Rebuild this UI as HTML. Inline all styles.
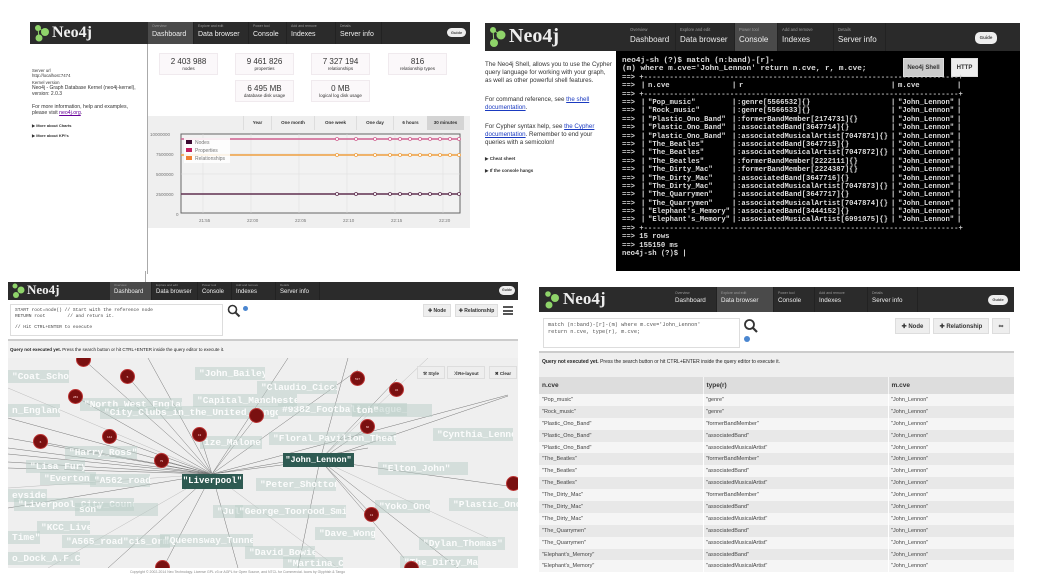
<!DOCTYPE html>
<html><head><meta charset="utf-8">
<style>
*{margin:0;padding:0;box-sizing:border-box}
body{width:1043px;height:588px;background:#fff;position:relative;overflow:hidden;font-family:"Liberation Sans",sans-serif;color:#333}
.a{position:absolute}
.hdr{position:absolute;background:#2b2b2b}
.tab{position:absolute;top:0;height:100%;color:#eee;border-right:1px solid #222}
.tab.on{background:#4a4a4a}
.tab small{position:absolute;left:4px;color:#999;white-space:nowrap}
.tab span{position:absolute;left:4px;white-space:nowrap}
.logo{position:absolute;color:#eee;font-family:"Liberation Serif",serif;font-weight:bold}
.guide{position:absolute;background:#eee;border-radius:5px;color:#444;text-align:center;font-weight:bold}
.mono{font-family:"Liberation Mono",monospace}
.lb{position:absolute;background:rgba(185,205,200,.5);color:rgba(255,255,255,.9);font-family:"Liberation Mono",monospace;font-weight:bold;font-size:9.5px;line-height:13px;padding:0 4px;white-space:nowrap;overflow:hidden}
.rc{position:absolute;width:15px;height:15px;border-radius:50%;background:#7a1010;border:1px solid #b33;color:#fcc;font-size:3px;text-align:center;line-height:15px}
.btn{position:absolute;background:#eee;border:1px solid #ddd;font-size:6px;font-weight:bold;color:#333;text-align:center}
.t td{padding:0 3px;font-size:5.5px;height:11.9px;color:#444}
.tr{position:relative;height:8.4px}
</style></head><body>

<!-- ============ PANEL 1 ============ -->
<div class="hdr" style="left:30px;top:22px;width:440px;height:22px">
  <svg class="a" style="left:4px;top:2px" width="16" height="18"><circle cx="4" cy="4" r="3" fill="#8fd46a"/><circle cx="11" cy="8" r="4" fill="#8fd46a"/><circle cx="5" cy="14" r="3.5" fill="#8fd46a"/><path d="M4 4L5 14M4 4L11 8" stroke="#8fd46a"/></svg>
  <div class="logo" style="left:22px;top:2px;font-size:16px">Neo4j</div>
  <div class="tab on" style="left:118px;width:46px"><small style="top:2px;font-size:3.5px">Overview</small><span style="top:9px;font-size:7px">Dashboard</span></div>
  <div class="tab" style="left:164px;width:55px"><small style="top:2px;font-size:3.5px">Explore and edit</small><span style="top:9px;font-size:7px">Data browser</span></div>
  <div class="tab" style="left:219px;width:38px"><small style="top:2px;font-size:3.5px">Power tool</small><span style="top:9px;font-size:7px">Console</span></div>
  <div class="tab" style="left:257px;width:49px"><small style="top:2px;font-size:3.5px">Add and remove</small><span style="top:9px;font-size:7px">Indexes</span></div>
  <div class="tab" style="left:306px;width:46px"><small style="top:2px;font-size:3.5px">Details</small><span style="top:9px;font-size:7px">Server info</span></div>
  <div class="guide" style="left:417px;top:6px;width:19px;height:9px;font-size:4px;line-height:9px">Guide</div>
</div>
<div class="a" style="left:147px;top:44px;width:1px;height:230px;background:#aaa"></div>
<div class="a" style="left:32px;top:68px;width:112px;font-size:4.3px;line-height:5px;color:#333">
Server url<br>http://localhost:7474<br><div style="height:2px"></div>Kernel version<br><span style="font-size:5px">Neo4j - Graph Database Kernel (neo4j-kernel), version: 2.0.3</span>
<div style="height:7px"></div><span style="font-size:5.2px;line-height:6px;display:block">For more information, help and examples, please visit <u style="color:#609">neo4j.org</u>.</span>
<div style="height:7px"></div><b style="font-size:4px">▶ More about Charts</b><div style="height:5px"></div><b style="font-size:4px">▶ More about KPI's</b>
</div>
<div class="a" style="left:159px;top:53px;width:59px;height:22px;background:#fbf8fa;border:1px solid #f0eaee;text-align:center"><div style="font-size:8px;margin-top:3px">2 403 988</div><div style="font-size:4.5px">nodes</div></div>
<div class="a" style="left:235px;top:53px;width:59px;height:22px;background:#fbf8fa;border:1px solid #f0eaee;text-align:center"><div style="font-size:8px;margin-top:3px">9 461 826</div><div style="font-size:4.5px">properties</div></div>
<div class="a" style="left:311px;top:53px;width:59px;height:22px;background:#fbf8fa;border:1px solid #f0eaee;text-align:center"><div style="font-size:8px;margin-top:3px">7 327 194</div><div style="font-size:4.5px">relationships</div></div>
<div class="a" style="left:388px;top:53px;width:59px;height:22px;background:#fbf8fa;border:1px solid #f0eaee;text-align:center"><div style="font-size:8px;margin-top:3px">816</div><div style="font-size:4.5px">relationship types</div></div>
<div class="a" style="left:235px;top:80px;width:59px;height:22px;background:#fbf8fa;border:1px solid #f0eaee;text-align:center"><div style="font-size:8px;margin-top:3px">6 495 MB</div><div style="font-size:4.5px">database disk usage</div></div>
<div class="a" style="left:311px;top:80px;width:59px;height:22px;background:#fbf8fa;border:1px solid #f0eaee;text-align:center"><div style="font-size:8px;margin-top:3px">0 MB</div><div style="font-size:4.5px">logical log disk usage</div></div>
<div class="a" style="left:148px;top:116px;width:322px;height:112px;background:#efefef"></div>
<div class="a" style="left:243px;top:116px;width:229px;height:14px;font-size:4.5px;font-weight:bold;color:#333">
<div class="a" style="left:0;width:28px;height:14px;border-left:1px solid #ddd;line-height:14px;text-align:center">Year</div>
<div class="a" style="left:28px;width:43px;height:14px;border-left:1px solid #ddd;line-height:14px;text-align:center">One month</div>
<div class="a" style="left:71px;width:42px;height:14px;border-left:1px solid #ddd;line-height:14px;text-align:center">One week</div>
<div class="a" style="left:113px;width:37px;height:14px;border-left:1px solid #ddd;line-height:14px;text-align:center">One day</div>
<div class="a" style="left:150px;width:34px;height:14px;border-left:1px solid #ddd;line-height:14px;text-align:center">6 hours</div>
<div class="a" style="left:184px;width:37px;height:14px;background:#d4d4d4;line-height:14px;text-align:center">30 minutes</div>
</div>
<svg class="a" style="left:148px;top:128px" width="322" height="100" font-family="Liberation Sans" font-size="4.5" fill="#777">
<rect x="33" y="6" width="279" height="79" fill="#f2f2f2" stroke="#666"/>
<g stroke="#ddd" stroke-width=".5"><line x1="33" y1="26" x2="312" y2="26"/><line x1="33" y1="46" x2="312" y2="46"/><line x1="33" y1="66" x2="312" y2="66"/><line x1="55" y1="6" x2="55" y2="85"/><line x1="103" y1="6" x2="103" y2="85"/><line x1="151" y1="6" x2="151" y2="85"/><line x1="199" y1="6" x2="199" y2="85"/><line x1="247" y1="6" x2="247" y2="85"/><line x1="295" y1="6" x2="295" y2="85"/></g>
<text x="2" y="8">10000000</text><text x="8" y="28">7500000</text><text x="8" y="48">5000000</text><text x="8" y="68">2500000</text><text x="28" y="88">0</text>
<text x="51" y="94">21:55</text><text x="99" y="94">22:00</text><text x="147" y="94">22:05</text><text x="195" y="94">22:10</text><text x="243" y="94">22:15</text><text x="291" y="94">22:20</text>
<line x1="33" y1="11" x2="312" y2="11" stroke="#d06090" stroke-width="1.5"/>
<line x1="33" y1="27" x2="312" y2="27" stroke="#f0a040" stroke-width="1.5"/>
<line x1="33" y1="66" x2="312" y2="66" stroke="#603050" stroke-width="1.5"/>
<g fill="#fff" stroke-width=".8">
<g stroke="#d06090"><circle cx="189" cy="11" r="1.5"/><circle cx="208" cy="11" r="1.5"/><circle cx="227" cy="11" r="1.5"/><circle cx="242" cy="11" r="1.5"/><circle cx="252" cy="11" r="1.5"/><circle cx="262" cy="11" r="1.5"/><circle cx="272" cy="11" r="1.5"/><circle cx="282" cy="11" r="1.5"/><circle cx="292" cy="11" r="1.5"/><circle cx="302" cy="11" r="1.5"/><circle cx="311" cy="11" r="1.5"/></g>
<g stroke="#f0a040"><circle cx="189" cy="27" r="1.5"/><circle cx="208" cy="27" r="1.5"/><circle cx="227" cy="27" r="1.5"/><circle cx="242" cy="27" r="1.5"/><circle cx="252" cy="27" r="1.5"/><circle cx="262" cy="27" r="1.5"/><circle cx="272" cy="27" r="1.5"/><circle cx="282" cy="27" r="1.5"/><circle cx="292" cy="27" r="1.5"/><circle cx="302" cy="27" r="1.5"/><circle cx="311" cy="27" r="1.5"/></g>
<g stroke="#603050"><circle cx="189" cy="66" r="1.5"/><circle cx="208" cy="66" r="1.5"/><circle cx="227" cy="66" r="1.5"/><circle cx="242" cy="66" r="1.5"/><circle cx="252" cy="66" r="1.5"/><circle cx="262" cy="66" r="1.5"/><circle cx="272" cy="66" r="1.5"/><circle cx="282" cy="66" r="1.5"/><circle cx="292" cy="66" r="1.5"/><circle cx="302" cy="66" r="1.5"/><circle cx="311" cy="66" r="1.5"/></g></g>
<rect x="36" y="10" width="46" height="25" fill="#fff" opacity=".85"/>
<rect x="38" y="12" width="6" height="4" fill="#3a0a30"/><rect x="38" y="20" width="6" height="4" fill="#c02060"/><rect x="38" y="28" width="6" height="4" fill="#f08030"/>
<text x="47" y="16" font-size="5">Nodes</text><text x="47" y="24" font-size="5">Properties</text><text x="47" y="32" font-size="5">Relationships</text>
</svg>

<!-- ============ PANEL 2 ============ -->
<div class="hdr" style="left:485px;top:23px;width:535px;height:28px;background:#2a2a2a">
  <svg class="a" style="left:3px;top:3px" width="18" height="22"><circle cx="5" cy="4" r="3" fill="#8fd46a"/><circle cx="13" cy="9" r="4.5" fill="#8fd46a"/><circle cx="6" cy="17" r="4" fill="#8fd46a"/><path d="M5 4L6 17M5 4L13 9" stroke="#8fd46a"/></svg>
  <div class="logo" style="left:24px;top:2px;font-size:20px">Neo4j</div>
  <div class="tab" style="left:141px;width:50px"><small style="top:4px;font-size:4.2px">Overview</small><span style="top:12px;font-size:8px">Dashboard</span></div>
  <div class="tab" style="left:191px;width:59px"><small style="top:4px;font-size:4.2px">Explore and edit</small><span style="top:12px;font-size:8px">Data browser</span></div>
  <div class="tab on" style="left:250px;width:43px"><small style="top:4px;font-size:4.2px">Power tool</small><span style="top:12px;font-size:8px">Console</span></div>
  <div class="tab" style="left:293px;width:56px"><small style="top:4px;font-size:4.2px">Add and remove</small><span style="top:12px;font-size:8px">Indexes</span></div>
  <div class="tab" style="left:349px;width:52px"><small style="top:4px;font-size:4.2px">Details</small><span style="top:12px;font-size:8px">Server info</span></div>
  <div class="guide" style="left:490px;top:9px;width:22px;height:12px;font-size:4.5px;line-height:12px">Guide</div>
</div>
<div class="a" style="left:485px;top:61px;width:128px;font-size:6.2px;line-height:8px;color:#333">
The Neo4j Shell, allows you to use the Cypher query language for working with your graph, as well as other powerful shell features.
<div style="height:11px"></div>For command reference, see <u style="color:#1a3ac0">the shell documentation</u>.
<div style="height:11px"></div>For Cypher syntax help, see <u style="color:#1a3ac0">the Cypher documentation</u>. Remember to end your queries with a semicolon!
<div style="height:8px"></div><b style="font-size:4.5px">▶ Cheat sheet</b><div style="height:4px"></div><b style="font-size:4.5px">▶ If the console hangs</b>
</div>
<div class="a" style="left:616px;top:51px;width:404px;height:220px;background:#000"></div>
<div class="btn" style="left:903px;top:58px;width:41px;height:19px;line-height:19px;background:#ccc;font-size:6px">Neo4j Shell</div>
<div class="btn" style="left:951px;top:58px;width:27px;height:19px;line-height:19px;background:#eee;font-size:6px">HTTP</div>
<div class="a mono" style="left:622px;top:57px;font-size:7.7px;font-weight:bold;line-height:8.4px;color:#ddd;white-space:pre">neo4j-sh (?)$ match (n:band)-[r]-
(m) where m.cve='John_Lennon' return n.cve, r, m.cve;</div>
<div class="a mono" style="left:622px;top:74px;font-size:7.2px;font-weight:bold;color:#ddd;white-space:nowrap;line-height:8.4px;width:400px"><div class="tr">==> <span style="color:#ccc">+-------------------------------------------------------------------------+</span></div><div class="tr">==><span class="a" style="left:19px">|</span><span class="a" style="left:26px">n.cve</span><span class="a" style="left:110px">|</span><span class="a" style="left:117px">r</span><span class="a" style="left:269px">|</span><span class="a" style="left:276px">m.cve</span><span class="a" style="left:335px">|</span></div><div class="tr">==> <span style="color:#ccc">+-------------------------------------------------------------------------+</span></div></div>
<div class="a mono" style="left:622px;top:99px;font-size:7.2px;font-weight:bold;color:#ddd;white-space:nowrap;line-height:8.4px;width:400px"><div class="tr">==><span class="a" style="left:19px">|</span><span class="a" style="left:26px">"Pop_music"</span><span class="a" style="left:110px">|</span><span class="a" style="left:115px">:genre[5566532]{}</span><span class="a" style="left:269px">|</span><span class="a" style="left:276px">"John_Lennon"</span><span class="a" style="left:335px">|</span></div><div class="tr">==><span class="a" style="left:19px">|</span><span class="a" style="left:26px">"Rock_music"</span><span class="a" style="left:110px">|</span><span class="a" style="left:115px">:genre[5566533]{}</span><span class="a" style="left:269px">|</span><span class="a" style="left:276px">"John_Lennon"</span><span class="a" style="left:335px">|</span></div><div class="tr">==><span class="a" style="left:19px">|</span><span class="a" style="left:26px">"Plastic_Ono_Band"</span><span class="a" style="left:110px">|</span><span class="a" style="left:115px">:formerBandMember[2174731]{}</span><span class="a" style="left:269px">|</span><span class="a" style="left:276px">"John_Lennon"</span><span class="a" style="left:335px">|</span></div><div class="tr">==><span class="a" style="left:19px">|</span><span class="a" style="left:26px">"Plastic_Ono_Band"</span><span class="a" style="left:110px">|</span><span class="a" style="left:115px">:associatedBand[3647714]{}</span><span class="a" style="left:269px">|</span><span class="a" style="left:276px">"John_Lennon"</span><span class="a" style="left:335px">|</span></div><div class="tr">==><span class="a" style="left:19px">|</span><span class="a" style="left:26px">"Plastic_Ono_Band"</span><span class="a" style="left:110px">|</span><span class="a" style="left:115px">:associatedMusicalArtist[7047871]{}</span><span class="a" style="left:269px">|</span><span class="a" style="left:276px">"John_Lennon"</span><span class="a" style="left:335px">|</span></div><div class="tr">==><span class="a" style="left:19px">|</span><span class="a" style="left:26px">"The_Beatles"</span><span class="a" style="left:110px">|</span><span class="a" style="left:115px">:associatedBand[3647715]{}</span><span class="a" style="left:269px">|</span><span class="a" style="left:276px">"John_Lennon"</span><span class="a" style="left:335px">|</span></div><div class="tr">==><span class="a" style="left:19px">|</span><span class="a" style="left:26px">"The_Beatles"</span><span class="a" style="left:110px">|</span><span class="a" style="left:115px">:associatedMusicalArtist[7047872]{}</span><span class="a" style="left:269px">|</span><span class="a" style="left:276px">"John_Lennon"</span><span class="a" style="left:335px">|</span></div><div class="tr">==><span class="a" style="left:19px">|</span><span class="a" style="left:26px">"The_Beatles"</span><span class="a" style="left:110px">|</span><span class="a" style="left:115px">:formerBandMember[2222111]{}</span><span class="a" style="left:269px">|</span><span class="a" style="left:276px">"John_Lennon"</span><span class="a" style="left:335px">|</span></div><div class="tr">==><span class="a" style="left:19px">|</span><span class="a" style="left:26px">"The_Dirty_Mac"</span><span class="a" style="left:110px">|</span><span class="a" style="left:115px">:formerBandMember[2224387]{}</span><span class="a" style="left:269px">|</span><span class="a" style="left:276px">"John_Lennon"</span><span class="a" style="left:335px">|</span></div><div class="tr">==><span class="a" style="left:19px">|</span><span class="a" style="left:26px">"The_Dirty_Mac"</span><span class="a" style="left:110px">|</span><span class="a" style="left:115px">:associatedBand[3647716]{}</span><span class="a" style="left:269px">|</span><span class="a" style="left:276px">"John_Lennon"</span><span class="a" style="left:335px">|</span></div><div class="tr">==><span class="a" style="left:19px">|</span><span class="a" style="left:26px">"The_Dirty_Mac"</span><span class="a" style="left:110px">|</span><span class="a" style="left:115px">:associatedMusicalArtist[7047873]{}</span><span class="a" style="left:269px">|</span><span class="a" style="left:276px">"John_Lennon"</span><span class="a" style="left:335px">|</span></div><div class="tr">==><span class="a" style="left:19px">|</span><span class="a" style="left:26px">"The_Quarrymen"</span><span class="a" style="left:110px">|</span><span class="a" style="left:115px">:associatedBand[3647717]{}</span><span class="a" style="left:269px">|</span><span class="a" style="left:276px">"John_Lennon"</span><span class="a" style="left:335px">|</span></div><div class="tr">==><span class="a" style="left:19px">|</span><span class="a" style="left:26px">"The_Quarrymen"</span><span class="a" style="left:110px">|</span><span class="a" style="left:115px">:associatedMusicalArtist[7047874]{}</span><span class="a" style="left:269px">|</span><span class="a" style="left:276px">"John_Lennon"</span><span class="a" style="left:335px">|</span></div><div class="tr">==><span class="a" style="left:19px">|</span><span class="a" style="left:26px">"Elephant's_Memory"</span><span class="a" style="left:110px">|</span><span class="a" style="left:115px">:associatedBand[3444152]{}</span><span class="a" style="left:269px">|</span><span class="a" style="left:276px">"John_Lennon"</span><span class="a" style="left:335px">|</span></div><div class="tr">==><span class="a" style="left:19px">|</span><span class="a" style="left:26px">"Elephant's_Memory"</span><span class="a" style="left:110px">|</span><span class="a" style="left:115px">:associatedMusicalArtist[6991075]{}</span><span class="a" style="left:269px">|</span><span class="a" style="left:276px">"John_Lennon"</span><span class="a" style="left:335px">|</span></div><div class="tr">==> <span style="color:#ccc">+-------------------------------------------------------------------------+</span></div><div class="tr">==> 15 rows</div><div class="tr">==> 155150 ms</div><div class="tr">neo4j-sh (?)$ |</div></div>

<!-- ============ PANEL 3 ============ -->
<div class="a" style="left:145px;top:271px;width:1px;height:11px;background:#aaa"></div>
<div class="hdr" style="left:8px;top:282px;width:510px;height:18px">
  <svg class="a" style="left:3px;top:1px" width="14" height="16"><circle cx="4" cy="3" r="2.5" fill="#8fd46a"/><circle cx="10" cy="7" r="3.5" fill="#8fd46a"/><circle cx="5" cy="12" r="3" fill="#8fd46a"/></svg>
  <div class="logo" style="left:19px;top:0;font-size:13px">Neo4j</div>
  <div class="tab on" style="left:102px;width:42px"><small style="top:1px;font-size:3px">Overview</small><span style="top:7px;font-size:6px">Dashboard</span></div>
  <div class="tab" style="left:144px;width:46px"><small style="top:1px;font-size:3px">Explore and edit</small><span style="top:7px;font-size:6px">Data browser</span></div>
  <div class="tab" style="left:190px;width:34px"><small style="top:1px;font-size:3px">Power tool</small><span style="top:7px;font-size:6px">Console</span></div>
  <div class="tab" style="left:224px;width:44px"><small style="top:1px;font-size:3px">Add and remove</small><span style="top:7px;font-size:6px">Indexes</span></div>
  <div class="tab" style="left:268px;width:44px"><small style="top:1px;font-size:3px">Details</small><span style="top:7px;font-size:6px">Server info</span></div>
  <div class="guide" style="left:491px;top:4px;width:16px;height:9px;font-size:3.5px;line-height:9px">Guide</div>
</div>
<div class="a mono" style="left:10px;top:304px;width:213px;height:32px;border:1px solid #ddd;font-size:4.6px;line-height:5.6px;padding:3px 4px;color:#444;white-space:pre">START root=node() // Start with the reference node
RETURN root        // and return it.

// Hit CTRL+ENTER to execute</div>
<svg class="a" style="left:227px;top:304px" width="14" height="14"><circle cx="5.5" cy="5.5" r="4" fill="none" stroke="#333" stroke-width="1.6"/><path d="M8.5 8.5L12.5 12.5" stroke="#333" stroke-width="2"/></svg>
<div class="a" style="left:243px;top:306px;width:5px;height:5px;border-radius:50%;background:#4a86d0"></div>
<div class="btn" style="left:423px;top:304px;width:28px;height:13px;line-height:13px;font-size:5px">✚ Node</div>
<div class="btn" style="left:455px;top:304px;width:43px;height:13px;line-height:13px;font-size:5px">✚ Relationship</div>
<div class="a" style="left:503px;top:306px;width:10px;height:9px;border-top:2px solid #555;border-bottom:2px solid #555"><div style="margin-top:1.5px;height:2px;background:#555"></div></div>
<div class="a" style="left:8px;top:339px;width:510px;height:2px;background:#ccc"></div>
<div class="a" style="left:8px;top:341px;width:510px;height:17px;background:#f2f2f2;font-size:4.5px;line-height:17px;padding-left:2px;color:#222"><b>Query not executed yet.</b> Press the search button or hit CTRL+ENTER inside the query editor to execute it.</div>
<div class="a" style="left:8px;top:358px;width:510px;height:210px;background:#efefef;overflow:hidden">
<svg class="a" style="left:0;top:0" width="510" height="210" stroke="#777" stroke-width=".5">
<g>
<line x1="204" y1="116" x2="75" y2="1"/><line x1="204" y1="116" x2="120" y2="19"/><line x1="204" y1="116" x2="68" y2="39"/><line x1="204" y1="116" x2="102" y2="79"/><line x1="204" y1="116" x2="33" y2="84"/><line x1="204" y1="116" x2="154" y2="103"/><line x1="204" y1="116" x2="192" y2="77"/><line x1="204" y1="116" x2="249" y2="58"/><line x1="204" y1="116" x2="0" y2="80"/><line x1="204" y1="116" x2="0" y2="90"/><line x1="204" y1="116" x2="0" y2="96"/><line x1="204" y1="116" x2="0" y2="104"/><line x1="204" y1="116" x2="0" y2="110"/><line x1="204" y1="116" x2="0" y2="60"/><line x1="204" y1="116" x2="155" y2="210"/><line x1="204" y1="116" x2="350" y2="12"/><line x1="204" y1="116" x2="360" y2="90"/><line x1="204" y1="116" x2="500" y2="37"/><line x1="204" y1="116" x2="280" y2="0"/><line x1="204" y1="116" x2="230" y2="210"/><line x1="204" y1="116" x2="100" y2="210"/><line x1="204" y1="116" x2="0" y2="150"/><line x1="204" y1="116" x2="140" y2="0"/>
<line x1="312" y1="102" x2="389" y2="21"/><line x1="312" y1="102" x2="360" y2="69"/><line x1="312" y1="102" x2="500" y2="128"/><line x1="312" y1="102" x2="364" y2="157"/><line x1="312" y1="102" x2="396" y2="200"/><line x1="312" y1="102" x2="500" y2="38"/><line x1="312" y1="102" x2="340" y2="0"/><line x1="312" y1="102" x2="290" y2="210"/><line x1="312" y1="102" x2="450" y2="210"/><line x1="312" y1="102" x2="204" y2="116"/>
</g>
<g stroke="#bbb"><line x1="0" y1="30" x2="204" y2="116"/><line x1="0" y1="130" x2="204" y2="116"/><line x1="40" y1="210" x2="204" y2="116"/><line x1="330" y1="210" x2="204" y2="116"/><line x1="420" y1="0" x2="312" y2="102"/><line x1="480" y1="180" x2="312" y2="102"/></g>
</svg>
<div class="lb" style="left:0;top:12px;width:61px">"Coat_School"</div>
<div class="lb" style="left:0;top:46px;width:52px">n_England"</div>
<div class="lb" style="left:72px;top:40px;width:102px">"North_West_England"</div>
<div class="lb" style="left:92px;top:48px;width:178px">"City_Clubs_in_the_United_Kingdom"</div>
<div class="lb" style="left:270px;top:45px;width:129px">#9382_Football_League_Cup"</div>
<div class="lb" style="left:344px;top:46px;width:80px">ton"</div>
<div class="lb" style="left:187px;top:9px;width:70px">"John_Bailey"</div>
<div class="lb" style="left:249px;top:23px;width:80px">"Claudio_Ciccia"</div>
<div class="lb" style="left:185px;top:36px;width:104px">"Capital_Manchester"</div>
<div class="lb" style="left:192px;top:78px;width:62px">ize_Malone"</div>
<div class="lb" style="left:261px;top:74px;width:127px">"Floral_Pavilion_Theatre"</div>
<div class="lb" style="left:425px;top:70px;width:80px">"Cynthia_Lennon"</div>
<div class="lb" style="left:57px;top:88px;width:72px">"Harry_Ross"</div>
<div class="lb" style="left:18px;top:102px;width:59px">"Lisa_Fury"</div>
<div class="lb" style="left:32px;top:114px;width:56px">"Everton_F</div>
<div class="lb" style="left:82px;top:116px;width:60px">"A562_road"</div>
<div class="lb" style="left:248px;top:120px;width:80px">"Peter_Shotton"</div>
<div class="lb" style="left:370px;top:104px;width:90px">"Elton_John"</div>
<div class="lb" style="left:367px;top:142px;width:55px">"Yoko_Ono"</div>
<div class="lb" style="left:441px;top:140px;width:70px">"Plastic_Ono</div>
<div class="lb" style="left:0;top:131px;width:39px">eyside"</div>
<div class="lb" style="left:6px;top:140px;width:120px">"Liverpool_City_Council"</div>
<div class="lb" style="left:67px;top:145px;width:83px">son"</div>
<div class="lb" style="left:205px;top:147px;width:30px">"Jul</div>
<div class="lb" style="left:227px;top:147px;width:111px">"George_Toorood_Smith"</div>
<div class="lb" style="left:29px;top:163px;width:53px">"KCC_Live"</div>
<div class="lb" style="left:0;top:173px;width:32px">Time"</div>
<div class="lb" style="left:307px;top:169px;width:60px">"Dave_Wong"</div>
<div class="lb" style="left:54px;top:177px;width:108px">"A565_road"cis_Ormond"</div>
<div class="lb" style="left:152px;top:176px;width:93px">"Queensway_Tunnel"</div>
<div class="lb" style="left:237px;top:188px;width:70px">"David_Bowie"</div>
<div class="lb" style="left:411px;top:179px;width:86px">"Dylan_Thomas"</div>
<div class="lb" style="left:275px;top:199px;width:60px">"Martina_Cole"</div>
<div class="lb" style="left:0;top:194px;width:72px">o_Dock_A.F.C."</div>
<div class="lb" style="left:392px;top:198px;width:78px">"The_Dirty_Mac"</div>
<div class="a mono" style="left:174px;top:116px;width:61px;height:15px;background:#2e5a52;color:#fff;font-weight:bold;font-size:9px;line-height:15px;text-align:center">"Liverpool"</div>
<div class="a mono" style="left:275px;top:95px;width:71px;height:14px;background:#2e5a52;color:#fff;font-weight:bold;font-size:8.5px;line-height:14px;text-align:center">"John_Lennon"</div>
<div class="rc" style="left:68px;top:-6px"></div>
<div class="rc" style="left:112px;top:11px">5</div><div class="rc" style="left:60px;top:31px">283</div><div class="rc" style="left:94px;top:71px">144</div><div class="rc" style="left:25px;top:76px">6</div><div class="rc" style="left:146px;top:95px">79</div><div class="rc" style="left:184px;top:69px">13</div><div class="rc" style="left:241px;top:50px"></div><div class="rc" style="left:342px;top:13px">537</div><div class="rc" style="left:381px;top:24px">34</div><div class="rc" style="left:352px;top:61px">66</div><div class="rc" style="left:356px;top:149px">13</div><div class="rc" style="left:498px;top:118px"></div><div class="rc" style="left:147px;top:202px"></div><div class="rc" style="left:396px;top:203px"></div>
<div class="btn" style="left:409px;top:8px;width:28px;height:13px;line-height:13px;font-size:4.5px">⚒ Style</div>
<div class="btn" style="left:439px;top:8px;width:38px;height:13px;line-height:13px;font-size:4.5px">⤨ Re-layout</div>
<div class="btn" style="left:481px;top:8px;width:28px;height:13px;line-height:13px;font-size:4.5px">✖ Clear</div>
</div>
<div class="a" style="left:130px;top:570px;font-size:3.5px;color:#888;white-space:nowrap">Copyright © 2002-2014 Neo Technology.  License GPL v3 or AGPL for Open Source, and NTCL for Commercial.  Icons by Glyphish &amp; Tango</div>

<!-- ============ PANEL 4 ============ -->
<div class="hdr" style="left:539px;top:287px;width:475px;height:25px">
  <svg class="a" style="left:5px;top:3px" width="16" height="20"><circle cx="4" cy="4" r="2.8" fill="#8fd46a"/><circle cx="11" cy="8" r="4" fill="#8fd46a"/><circle cx="5" cy="15" r="3.5" fill="#8fd46a"/></svg>
  <div class="logo" style="left:24px;top:2px;font-size:17px">Neo4j</div>
  <div class="tab" style="left:132px;width:46px"><small style="top:4px;font-size:3.5px">Overview</small><span style="top:10px;font-size:6.3px">Dashboard</span></div>
  <div class="tab on" style="left:178px;width:57px"><small style="top:4px;font-size:3.5px">Explore and edit</small><span style="top:10px;font-size:6.3px">Data browser</span></div>
  <div class="tab" style="left:235px;width:41px"><small style="top:4px;font-size:3.5px">Power tool</small><span style="top:10px;font-size:6.3px">Console</span></div>
  <div class="tab" style="left:276px;width:53px"><small style="top:4px;font-size:3.5px">Add and remove</small><span style="top:10px;font-size:6.3px">Indexes</span></div>
  <div class="tab" style="left:329px;width:50px"><small style="top:4px;font-size:3.5px">Details</small><span style="top:10px;font-size:6.3px">Server info</span></div>
  <div class="guide" style="left:449px;top:8px;width:20px;height:10px;font-size:4px;line-height:10px">Guide</div>
</div>
<div class="a mono" style="left:543px;top:318px;width:197px;height:30px;border:1px solid #ddd;font-size:5.3px;line-height:6.5px;padding:3px 4px;color:#555;white-space:pre">match (n:band)-[r]-(m) where m.cve='John_Lennon'
return n.cve, type(r), m.cve;</div>
<svg class="a" style="left:743px;top:318px" width="16" height="16"><circle cx="6.5" cy="6.5" r="4.5" fill="none" stroke="#333" stroke-width="1.8"/><path d="M10 10L14 14" stroke="#333" stroke-width="2.2"/></svg>
<div class="a" style="left:744px;top:336px;width:6px;height:6px;border-radius:50%;background:#4a86d0"></div>
<div class="btn" style="left:895px;top:318px;width:35px;height:16px;line-height:16px;font-size:6px">✚ Node</div>
<div class="btn" style="left:933px;top:318px;width:56px;height:16px;line-height:16px;font-size:6px">✚ Relationship</div>
<div class="btn" style="left:992px;top:318px;width:18px;height:16px;line-height:16px;font-size:7px">∞</div>
<div class="a" style="left:539px;top:351px;width:475px;height:2px;background:#ccc"></div>
<div class="a" style="left:539px;top:353px;width:475px;height:24px;background:#efefef;font-size:5px;line-height:18px;padding-left:3px;color:#222"><b>Query not executed yet.</b> Press the search button or hit CTRL+ENTER inside the query editor to execute it.</div>
<table class="a t" style="left:539px;top:377px;width:475px;border-collapse:collapse">
<tr style="background:#ddd"><td style="width:164px;height:17px;font-size:6.5px;font-weight:bold;color:#333;border-right:1px solid #f5f5f5">n.cve</td><td style="width:185px;font-size:6.5px;font-weight:bold;color:#333;border-right:1px solid #f5f5f5">type(r)</td><td style="font-size:6.5px;font-weight:bold;color:#333">m.cve</td></tr>
<tr style="background:#f5f5f5"><td>"Pop_music"</td><td>"genre"</td><td>"John_Lennon"</td></tr>
<tr style="background:#e8e8e8"><td>"Rock_music"</td><td>"genre"</td><td>"John_Lennon"</td></tr>
<tr style="background:#f5f5f5"><td>"Plastic_Ono_Band"</td><td>"formerBandMember"</td><td>"John_Lennon"</td></tr>
<tr style="background:#e8e8e8"><td>"Plastic_Ono_Band"</td><td>"associatedBand"</td><td>"John_Lennon"</td></tr>
<tr style="background:#f5f5f5"><td>"Plastic_Ono_Band"</td><td>"associatedMusicalArtist"</td><td>"John_Lennon"</td></tr>
<tr style="background:#e8e8e8"><td>"The_Beatles"</td><td>"formerBandMember"</td><td>"John_Lennon"</td></tr>
<tr style="background:#f5f5f5"><td>"The_Beatles"</td><td>"associatedBand"</td><td>"John_Lennon"</td></tr>
<tr style="background:#e8e8e8"><td>"The_Beatles"</td><td>"associatedMusicalArtist"</td><td>"John_Lennon"</td></tr>
<tr style="background:#f5f5f5"><td>"The_Dirty_Mac"</td><td>"formerBandMember"</td><td>"John_Lennon"</td></tr>
<tr style="background:#e8e8e8"><td>"The_Dirty_Mac"</td><td>"associatedBand"</td><td>"John_Lennon"</td></tr>
<tr style="background:#f5f5f5"><td>"The_Dirty_Mac"</td><td>"associatedMusicalArtist"</td><td>"John_Lennon"</td></tr>
<tr style="background:#e8e8e8"><td>"The_Quarrymen"</td><td>"associatedBand"</td><td>"John_Lennon"</td></tr>
<tr style="background:#f5f5f5"><td>"The_Quarrymen"</td><td>"associatedMusicalArtist"</td><td>"John_Lennon"</td></tr>
<tr style="background:#e8e8e8"><td>"Elephant's_Memory"</td><td>"associatedBand"</td><td>"John_Lennon"</td></tr>
<tr style="background:#f5f5f5"><td>"Elephant's_Memory"</td><td>"associatedMusicalArtist"</td><td>"John_Lennon"</td></tr>
</table>
<div class="a" style="left:703px;top:394px;width:1px;height:178px;background:#fff"></div>
<div class="a" style="left:888px;top:394px;width:1px;height:178px;background:#fff"></div>
</body></html>
